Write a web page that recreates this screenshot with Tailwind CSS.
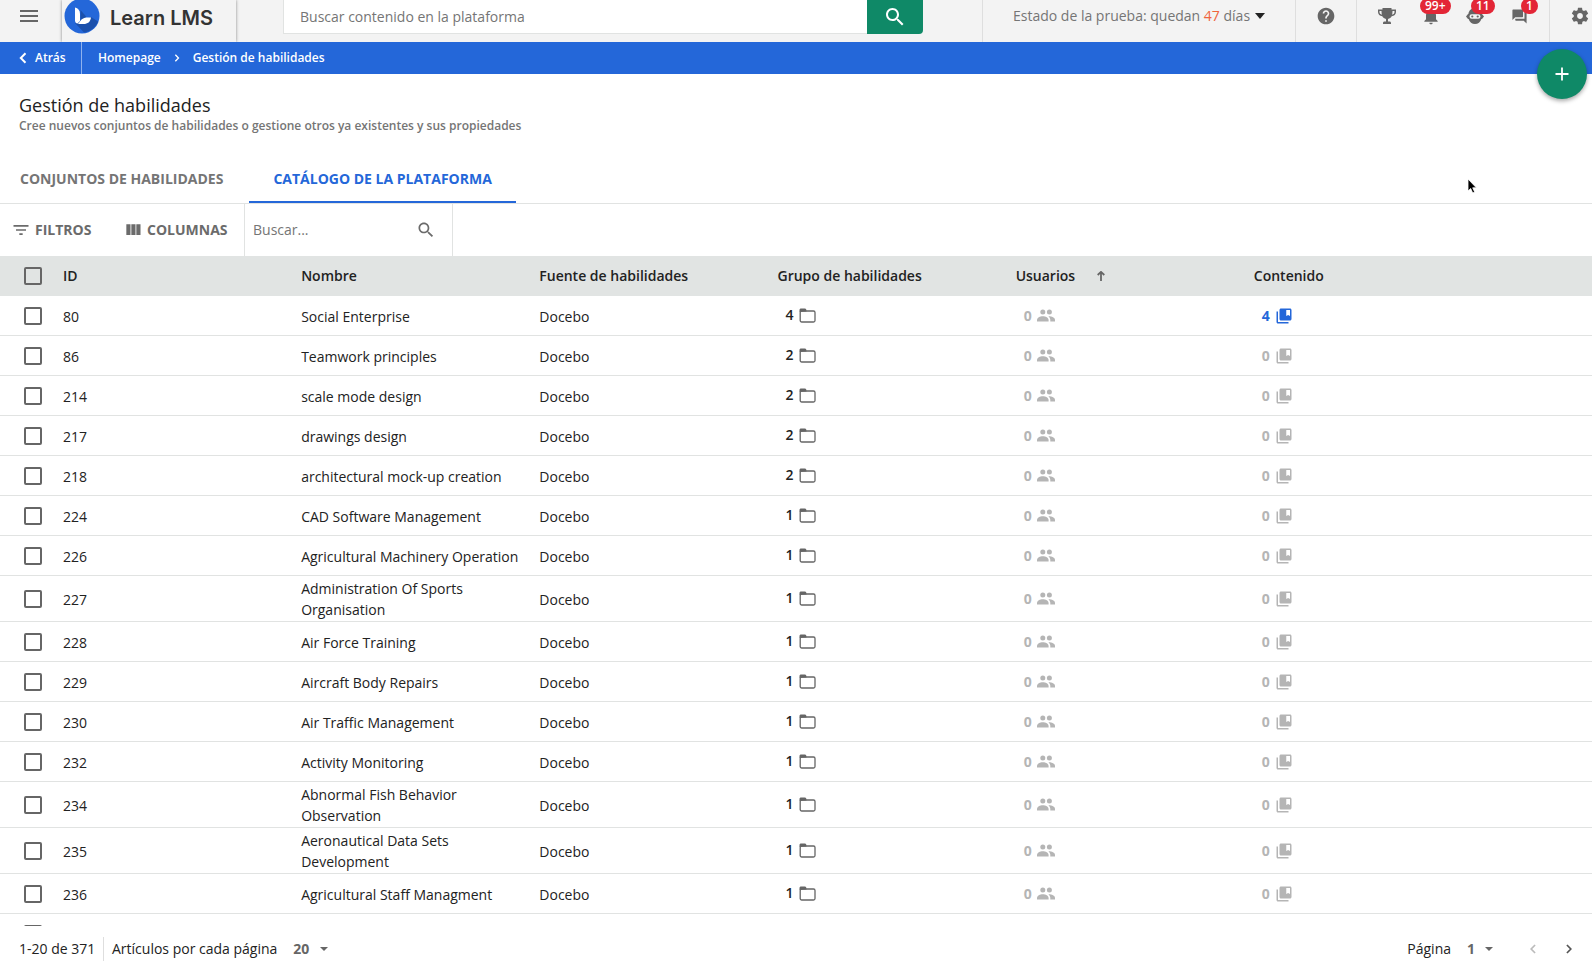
<!DOCTYPE html>
<html lang="es">
  <head>
    <meta charset="UTF-8" />
    <meta name="viewport" content="width=device-width, initial-scale=1.0" />
    <title>Gestión de habilidades | Learn LMS</title>
    <script src="https://cdn.jsdelivr.net/npm/@tailwindcss/browser@4"></script>
  </head>

  <body
    class="relative flex h-screen flex-col overflow-hidden bg-white font-['Open_Sans','Noto_Sans',sans-serif] text-sm text-[#222]"
  >
    <!-- Icon sprite -->
    <svg class="hidden">
      <symbol id="i-menu" viewBox="0 0 24 24">
        <path d="M3 18h18v-2H3v2zm0-5h18v-2H3v2zm0-7v2h18V6H3z" />
      </symbol>
      <symbol id="i-search" viewBox="0 0 24 24">
        <path
          d="M15.5 14h-.79l-.28-.27C15.41 12.59 16 11.11 16 9.5 16 5.91 13.09 3 9.5 3S3 5.91 3 9.5 5.91 16 9.5 16c1.61 0 3.09-.59 4.23-1.57l.27.28v.79l5 4.99L20.49 19l-4.99-5zm-6 0C7.01 14 5 11.99 5 9.5S7.01 5 9.5 5 14 7.01 14 9.5 11.99 14 9.5 14z"
        />
      </symbol>
      <symbol id="i-help" viewBox="0 0 24 24">
        <path
          d="M12 2C6.48 2 2 6.48 2 12s4.48 10 10 10 10-4.48 10-10S17.52 2 12 2zm1 17h-2v-2h2v2zm2.07-7.75l-.9.92C13.45 12.9 13 13.5 13 15h-2v-.5c0-1.1.45-2.1 1.17-2.83l1.24-1.26c.37-.36.59-.86.59-1.41 0-1.1-.9-2-2-2s-2 .9-2 2H8c0-2.21 1.79-4 4-4s4 1.79 4 4c0 .88-.36 1.68-.93 2.25z"
        />
      </symbol>
      <symbol id="i-trophy" viewBox="0 0 18 18">
        <path
          d="M4.500 1h9v1.400H18V5c0 2.300-1.800 4-4.300 4.300-.8 1.500-2 2.400-3.700 2.600v2.600h1.500c.9 0 1.500.6 1.500 1.500v1H5v-1c0-.9.600-1.500 1.500-1.500H8v-2.600c-1.700-.2-2.900-1.100-3.700-2.600C1.800 9 0 7.300 0 5V2.400h4.500V1zM1.500 4v1c0 1.300.900 2.300 2.400 2.700C3.600 6.600 3.500 5.300 3.500 4h-2zm13 0c0 1.300-.1 2.600-.4 3.700C15.600 7.300 16.500 6.300 16.500 5V4h-2z"
        />
      </symbol>
      <symbol id="i-bell" viewBox="0 0 24 24">
        <path
          d="M12 22c1.1 0 2-.9 2-2h-4c0 1.100.890 2 2 2zm6-6v-5c0-3.070-1.640-5.640-4.500-6.320V4c0-.83-.67-1.500-1.500-1.500s-1.500.67-1.500 1.500v.68C7.630 5.360 6 7.920 6 11v5l-2 2v1h16v-1l-2-2z"
        />
      </symbol>
      <symbol id="i-robot" viewBox="0 0 18 18">
        <path
          fill-rule="evenodd"
          d="M9 1c3.500 0 6.300 2.600 6.600 6H16l2 2.500-2 2.500h-.6c-.9 3-3.400 5-6.400 5s-5.500-2-6.400-5H2L0 9.500 2 7h.4C2.700 3.600 5.500 1 9 1zM5.700 7.300a2.200 2.200 0 0 0 0 4.400h6.600a2.200 2.200 0 0 0 0-4.400H5.700z"
        />
        <circle cx="6.300" cy="9.500" r="1.100" />
        <circle cx="11.700" cy="9.500" r="1.100" />
      </symbol>
      <symbol id="i-chat" viewBox="0 0 24 24">
        <path
          d="M21 6h-2v9H6v2c0 .55.45 1 1 1h11l4 4V7c0-.55-.45-1-1-1zm-4 6V3c0-.55-.45-1-1-1H3c-.55 0-1 .45-1 1v14l4-4h10c.55 0 1-.45 1-1z"
        />
      </symbol>
      <symbol id="i-gear" viewBox="0 0 24 24">
        <path
          d="M19.43 12.98c.04-.32.07-.64.07-.98s-.03-.66-.07-.98l2.11-1.65c.19-.15.24-.42.12-.64l-2-3.46c-.12-.22-.39-.3-.61-.22l-2.49 1c-.52-.4-1.08-.73-1.69-.98l-.38-2.65C14.46 2.18 14.25 2 14 2h-4c-.25 0-.46.18-.49.42l-.38 2.65c-.61.25-1.17.59-1.69.98l-2.49-1c-.23-.09-.49 0-.61.22l-2 3.46c-.13.22-.07.49.12.64l2.11 1.65c-.04.32-.07.65-.07.98s.03.66.07.98l-2.11 1.65c-.19.15-.24.42-.12.64l2 3.46c.12.22.39.3.61.22l2.49-1c.52.4 1.08.73 1.69.98l.38 2.65c.03.24.24.42.49.42h4c.25 0 .46-.18.49-.42l.38-2.65c.61-.25 1.17-.59 1.69-.98l2.49 1c.23.09.49 0 .61-.22l2-3.46c.12-.22.07-.49-.12-.64l-2.11-1.65zM12 15.5c-1.93 0-3.5-1.57-3.5-3.5s1.57-3.5 3.5-3.5 3.5 1.57 3.5 3.5-1.57 3.5-3.5 3.5z"
        />
      </symbol>
      <symbol id="i-filter" viewBox="0 0 24 24">
        <path d="M10 18h4v-2h-4v2zM3 6v2h18V6H3zm3 7h12v-2H6v2z" />
      </symbol>
      <symbol id="i-columns" viewBox="0 0 24 24">
        <path d="M10 18h5V5h-5v13zm-6 0h5V5H4v13zM16 5v13h5V5h-5z" />
      </symbol>
      <symbol id="i-left" viewBox="0 0 8 12">
        <path d="M6.500 1.200L1.800 6l4.700 4.800" fill="none" stroke="currentColor" stroke-width="2" />
      </symbol>
      <symbol id="i-right" viewBox="0 0 8 12">
        <path d="M1.500 1.200L6.200 6l-4.700 4.800" fill="none" stroke="currentColor" stroke-width="2" />
      </symbol>
      <symbol id="i-folder" viewBox="0 0 17 15">
        <path d="M.500 4V2C.500 1 1.200.500 2 .500h3.800c.7 0 1.200.4 1.400 1L7.600 3.500z" />
        <rect x="1.200" y="3" width="14.800" height="11" rx="1.500" fill="none" stroke="currentColor" stroke-width="1.300" />
      </symbol>
      <symbol id="i-users" viewBox="0 0 18 13">
        <circle cx="5.800" cy="3" r="2.500" />
        <circle cx="12.400" cy="3" r="2.500" />
        <path d="M0 12.500V11c0-2.500 3-3.800 5.800-3.800s5.800 1.300 5.800 3.800v1.500H0z" />
        <path d="M11.400 7.300C14.500 7.200 18 8.400 18 11v1.500h-4.700c.3-2.300-.5-4-1.900-5.200z" />
      </symbol>
      <symbol id="i-content" viewBox="0 0 24 24">
        <path
          d="M4 6H2v14c0 1.100.9 2 2 2h14v-2H4V6zM20 2H8c-1.100 0-2 .9-2 2v12c0 1.100.9 2 2 2h12c1.100 0 2-.9 2-2V4c0-1.100-.9-2-2-2zm0 10l-2.500-1.500L15 12V4h5v8z"
        />
      </symbol>
    </svg>

    <!-- Top bar -->
    <header class="flex h-[42px] shrink-0 items-start overflow-hidden bg-[#f3f3f3] text-[#666]">
      <button type="button" aria-label="Menú" class="flex h-8 w-[62px] items-center pl-[17px]">
        <svg class="size-6 fill-current"><use href="#i-menu" /></svg>
      </button>
      <a href="#" class="flex h-full w-[174px] items-start gap-2.5 pl-0.5 shadow-[0_0_3px_rgba(0,0,0,0.45)]">
        <svg class="h-[34px] w-9 shrink-0" viewBox="0 0 36 34">
          <circle cx="18" cy="16" r="17.500" fill="#2467d9" />
          <path d="M11 23l9 9.500c6-1 12-5 14-11L27 17z" fill="#1b50ac" />
          <path d="M16.500 10l6 7-6 5z" fill="#1b50ac" />
          <path d="M11 7.500c3.200.6 5 3 5 6.500v7l-2.500 2.500c-1.600-.3-2.500-1.400-2.500-3V7.500z" fill="#fff" />
          <path d="M14 24l3.500-4.500c1.800-1.800 4.500-2.300 9.500-2-.6 4.400-3.200 6.500-7.500 6.500H14z" fill="#fff" />
        </svg>
        <span class="font-['Inter',sans-serif] text-xl leading-9 font-semibold text-[#333]">Learn LMS</span>
      </a>
      <form class="ml-[47px] flex h-[34px] w-[640px]" onsubmit="return false">
        <input
          type="text"
          aria-label="Buscar contenido en la plataforma"
          placeholder="Buscar contenido en la plataforma"
          class="h-full min-w-0 flex-1 border-b border-l border-[#e1e3e2] bg-white px-4 placeholder:text-[#757575]"
        />
        <button
          type="submit"
          aria-label="Buscar"
          class="flex h-full w-14 items-center justify-center rounded-br-sm bg-[#0f8967] text-white"
        >
          <svg class="size-6 fill-current"><use href="#i-search" /></svg>
        </button>
      </form>
      <div class="ml-auto flex h-full">
        <div class="h-full w-[313px] border-l border-[#dedede]">
          <button type="button" class="flex h-8 items-center gap-[5px] pl-[30px] text-[#757575]">
            <span>Estado de la prueba: quedan <span class="text-[#f0643c]">47</span> días</span>
            <svg class="h-1.5 w-2.5 fill-[#222]" viewBox="0 0 10 6"><path d="M0 0h10L5 6z" /></svg>
          </button>
        </div>
        <div class="h-full w-[61px] border-l border-[#dedede]">
          <button type="button" aria-label="Ayuda" class="flex h-8 w-full items-center justify-center">
            <svg class="size-5 fill-current"><use href="#i-help" /></svg>
          </button>
        </div>
        <div class="flex h-full w-[193px] border-l border-[#dedede] pl-2">
          <button type="button" aria-label="Logros" class="flex h-8 w-11 items-center justify-center">
            <svg class="size-[18px] fill-current"><use href="#i-trophy" /></svg>
          </button>
          <button type="button" aria-label="Notificaciones" class="relative flex h-8 w-11 items-center justify-center">
            <svg class="size-5 fill-current"><use href="#i-bell" /></svg>
            <span class="absolute -top-0.5 left-[11px] h-4 rounded-full bg-[#e32636] px-[5px] text-xs leading-4 font-semibold text-white">99+</span>
          </button>
          <button type="button" aria-label="Asistente" class="relative flex h-8 w-11 items-center justify-center">
            <svg class="size-[18px] fill-current"><use href="#i-robot" /></svg>
            <span class="absolute -top-0.5 left-[18px] h-4 rounded-full bg-[#e32636] px-[5px] text-xs leading-4 font-semibold text-white">11</span>
          </button>
          <button type="button" aria-label="Mensajes" class="relative flex h-8 w-11 items-center justify-center">
            <svg class="size-[17px] fill-current"><use href="#i-chat" /></svg>
            <span class="absolute -top-0.5 left-6 h-4 rounded-full bg-[#e32636] px-[5px] text-xs leading-4 font-semibold text-white">1</span>
          </button>
        </div>
        <div class="h-full w-[43px] border-l border-[#dedede]">
          <button type="button" aria-label="Ajustes" class="flex h-8 w-full items-center justify-end pr-0.5">
            <svg class="size-5 fill-current"><use href="#i-gear" /></svg>
          </button>
        </div>
      </div>
    </header>

    <!-- Breadcrumbs -->
    <nav class="flex h-8 shrink-0 items-center bg-[#2467d9] text-xs font-semibold text-white">
      <a href="#" class="flex h-full w-[82px] items-center gap-2 border-r border-[#8fb2ee] pl-[19px]">
        <svg class="h-3 w-2"><use href="#i-left" /></svg>
        Atrás
      </a>
      <a href="#" class="pl-4">Homepage</a>
      <svg class="mx-[13px] h-2 w-1.5"><use href="#i-right" /></svg>
      <span>Gestión de habilidades</span>
    </nav>

    <!-- Page heading -->
    <div class="shrink-0 px-[19px] pt-[19px]">
      <h1 class="text-lg leading-6 font-medium">Gestión de habilidades</h1>
      <p class="text-xs leading-[18px] font-semibold text-[#757575]">
        Cree nuevos conjuntos de habilidades o gestione otros ya existentes y sus propiedades
      </p>
    </div>

    <!-- Tabs -->
    <div role="tablist" class="mt-[19px] flex h-[50px] shrink-0 border-b border-[#e1e3e2]">
      <button type="button" role="tab" class="h-[49px] pr-[26px] pl-5 font-bold text-[#757575]">
        CONJUNTOS DE HABILIDADES
      </button>
      <button
        type="button"
        role="tab"
        aria-selected="true"
        class="h-[49px] border-y-2 border-t-transparent border-b-[#2467d9] px-6 font-bold text-[#2467d9]"
      >
        CATÁLOGO DE LA PLATAFORMA
      </button>
    </div>

    <!-- Toolbar -->
    <div class="flex h-[52px] shrink-0 items-stretch text-[#6b6b6b]">
      <button type="button" class="flex w-[113px] items-center gap-1 pl-[11px] font-bold">
        <svg class="size-5 fill-current"><use href="#i-filter" /></svg>
        FILTROS
      </button>
      <button type="button" class="flex w-[131px] items-center gap-1 pl-2.5 font-bold">
        <svg class="size-5 fill-current"><use href="#i-columns" /></svg>
        COLUMNAS
      </button>
      <div class="flex w-[209px] items-center border-x border-[#e1e3e2] pr-4 pl-2">
        <input
          type="text"
          aria-label="Buscar habilidades"
          placeholder="Buscar..."
          class="min-w-0 flex-1 placeholder:text-[#757575]"
        />
        <svg class="size-5 fill-current"><use href="#i-search" /></svg>
      </div>
    </div>

    <!-- Skills table -->
    <main class="min-h-0 flex-1 overflow-hidden">
      <table class="w-full table-fixed border-separate border-spacing-0 text-left">
        <colgroup>
          <col class="w-[63px]" />
          <col />
          <col />
          <col />
          <col />
          <col />
          <col />
          <col class="w-[100px]" />
        </colgroup>
        <thead>
          <tr class="h-10 bg-[#e1e4e3]">
            <th class="pl-6">
              <input
                type="checkbox"
                aria-label="Seleccionar todo"
                class="block size-[18px] appearance-none rounded-xs border-2 border-[#666]"
              />
            </th>
            <th class="font-semibold">ID</th>
            <th class="font-semibold">Nombre</th>
            <th class="font-semibold">Fuente de habilidades</th>
            <th class="font-semibold">Grupo de habilidades</th>
            <th class="font-semibold">
              <span class="flex items-center gap-[22px]">
                Usuarios
                <svg class="h-2.5 w-2" viewBox="0 0 8 10">
                  <path d="M4 10V1M.700 4L4 .900 7.300 4" fill="none" stroke="#666" stroke-width="1.800" />
                </svg>
              </span>
            </th>
            <th class="font-semibold">Contenido</th>
            <th></th>
          </tr>
        </thead>
        <tbody id="skills"></tbody>
      </table>
    </main>

    <!-- Pagination -->
    <footer class="flex h-9 shrink-0 items-center pt-2.5 pr-[19px] pl-[19px]">
      <span class="w-[84px]">1-20 de 371</span>
      <label for="pageSize" class="border-l border-[#dedede] pl-2 leading-6">Artículos por cada página</label>
      <div class="relative ml-4 flex items-center">
        <select id="pageSize" class="w-[35px] appearance-none font-bold text-[#666]">
          <option>20</option>
          <option>50</option>
          <option>100</option>
        </select>
        <svg class="pointer-events-none absolute right-0 h-1 w-2 fill-[#666]" viewBox="0 0 8 4"><path d="M0 0h8L4 4z" /></svg>
      </div>
      <label for="page" class="ml-auto">Página</label>
      <div class="relative ml-4 flex items-center">
        <select id="page" class="w-[26px] appearance-none font-bold text-[#666]">
          <option>1</option>
          <option>2</option>
        </select>
        <svg class="pointer-events-none absolute right-0 h-1 w-2 fill-[#666]" viewBox="0 0 8 4"><path d="M0 0h8L4 4z" /></svg>
      </div>
      <button type="button" aria-label="Página anterior" disabled class="ml-9 text-[#bbb]">
        <svg class="h-2.5 w-2"><use href="#i-left" /></svg>
      </button>
      <button type="button" aria-label="Página siguiente" class="ml-7 text-[#555]">
        <svg class="h-2.5 w-2"><use href="#i-right" /></svg>
      </button>
    </footer>

    <!-- Floating add button -->
    <button
      type="button"
      aria-label="Añadir"
      class="absolute top-[49px] right-[5px] flex size-[50px] items-center justify-center rounded-full bg-[#0f8967] shadow-[0_2px_4px_rgba(0,0,0,0.35)]"
    >
      <svg class="size-3.5" viewBox="0 0 14 14"><path d="M7 .500v13M.500 7h13" stroke="#fff" stroke-width="1.800" /></svg>
    </button>

    <!-- Pointer -->
    <svg class="pointer-events-none absolute top-[178px] right-[115px] h-4 w-2.5" viewBox="0 0 10 16">
      <path d="M1 1v12l2.700-2.500 2 4.500 2-.9-2-4.300H9.400z" fill="#000" stroke="#fff" stroke-width=".8" />
    </svg>

    <script>
      // id, name, groups, users, content
      const skills = [
        [80, "Social Enterprise", 4, 0, 4],
        [86, "Teamwork principles", 2, 0, 0],
        [214, "scale mode design", 2, 0, 0],
        [217, "drawings design", 2, 0, 0],
        [218, "architectural mock-up creation", 2, 0, 0],
        [224, "CAD Software Management", 1, 0, 0],
        [226, "Agricultural Machinery Operation", 1, 0, 0],
        [227, "Administration Of Sports Organisation", 1, 0, 0],
        [228, "Air Force Training", 1, 0, 0],
        [229, "Aircraft Body Repairs", 1, 0, 0],
        [230, "Air Traffic Management", 1, 0, 0],
        [232, "Activity Monitoring", 1, 0, 0],
        [234, "Abnormal Fish Behavior Observation", 1, 0, 0],
        [235, "Aeronautical Data Sets Development", 1, 0, 0],
        [236, "Agricultural Staff Managment", 1, 0, 0],
      ];

      const countColor = (n) => (n > 0 ? "text-[#2467d9]" : "text-[#b5b5b5]");

      const checkCell = (label) => `
        <td class="border-b border-[#e1e3e2] pl-6">
          <input type="checkbox" aria-label="Seleccionar ${label}"
            class="block size-[18px] appearance-none rounded-xs border-2 border-[#666]" />
        </td>`;

      const rows = skills.map(
        ([id, name, groups, users, content]) => `
          <tr class="h-10">
            ${checkCell(name)}
            <td class="border-b border-[#e1e3e2] pt-0.5">${id}</td>
            <td class="border-b border-[#e1e3e2] pt-0.5 pr-4 pb-px leading-[21px]">${name}</td>
            <td class="border-b border-[#e1e3e2] pt-0.5">Docebo</td>
            <td class="border-b border-[#e1e3e2]">
              <span class="flex items-center gap-1.5 pl-2 font-semibold"><span class="pb-0.5">${groups}</span>
                <svg class="h-[15px] w-[17px] fill-[#666] text-[#666]"><use href="#i-folder" /></svg>
              </span>
            </td>
            <td class="border-b border-[#e1e3e2]">
              <span class="flex items-center gap-[5px] pl-2 font-bold ${countColor(users)}">${users}
                <svg class="h-[13px] w-[18px] fill-current"><use href="#i-users" /></svg>
              </span>
            </td>
            <td class="border-b border-[#e1e3e2]">
              <span class="flex items-center gap-[5px] pl-2 font-bold ${countColor(content)}">${content}
                <svg class="size-[18px] fill-current"><use href="#i-content" /></svg>
              </span>
            </td>
            <td class="border-b border-[#e1e3e2]"></td>
          </tr>`
      );

      rows.push(`<tr class="h-10">${checkCell("siguiente")}<td colspan="7"></td></tr>`);

      document.getElementById("skills").innerHTML = rows.join("");
    </script>
  </body>
</html>
